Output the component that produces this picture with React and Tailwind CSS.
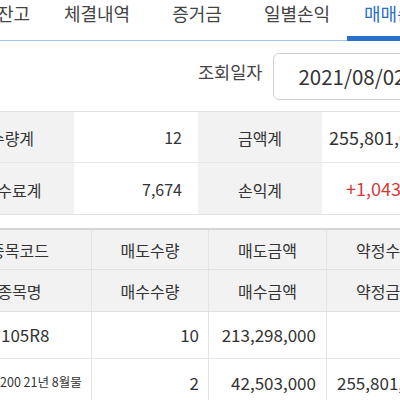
const tabs = ['계좌잔고', '체결내역', '증거금', '일별손익', '매매손익'];

const summary = [
  ['수량계', '12', '금액계', '255,801,000', false],
  ['수수료계', '7,674', '손익계', '+1,043,000', true],
];

function Cell({ children, className = '' }) {
  return <div className={`flex items-center border-r border-[#e4e4e4] ${className}`}>{children}</div>;
}

export default function App() {
  return (
    <div
      className="w-[400px] h-[400px] overflow-hidden bg-white text-[#333]"
      style={{ fontFamily: '"Noto Sans CJK KR", "Noto Sans", sans-serif' }}
    >
      {/* tabs */}
      <div className="flex ml-[-53px] h-[41px]">
        {tabs.map((t, i) => {
          const active = i === tabs.length - 1;
          return (
            <div
              key={t}
              className={`w-[100px] shrink-0 h-[41px] flex justify-center text-[18px] leading-[26px] ${
                active ? 'border-b-[5px] border-[#2c6fc8] text-[#2c6fc8]' : 'border-b border-[#9fc2ec] text-[#444]'
              }`}
            >
              {t}
            </div>
          );
        })}
      </div>

      {/* date */}
      <div className="flex items-center h-[70px] pl-[198px]">
        <span className="text-[17.5px] text-[#444] mb-[8px] shrink-0">조회일자</span>
        <div className="ml-[11px] shrink-0 w-[200px] h-[47px] border border-[#cfcfcf] rounded-[6px] flex items-center pl-[24px] text-[20.5px] text-[#333]">
          2021/08/02
        </div>
      </div>

      {/* summary */}
      <div className="ml-[-50px] border-t border-b border-[#e2e2e2]">
        {summary.map(([l1, v1, l2, v2, red], i) => (
          <div key={l1} className={`grid grid-cols-[124px_124px_124px_124px] h-[51px] ${i === 0 ? 'border-b border-[#e6e6e6]' : ''}`}>
            <div className="bg-[#f2f2f2] flex items-center justify-center text-[16px] pt-[2px]">{l1}</div>
            <div className="flex items-center justify-end pr-[16px] text-[16px]">{v1}</div>
            <div className="bg-[#f2f2f2] flex items-center justify-center text-[16px] pt-[2px]">{l2}</div>
            <div className={`flex items-center text-[18px] ${red ? 'pl-[24px] text-[#d23a3a]' : 'pl-[7px]'}`}>{v2}</div>
          </div>
        ))}
      </div>

      {/* detail table */}
      <div className="mt-[13px] ml-[-52px] border-t-2 border-[#d4d4d4]">
        <div className="grid grid-cols-[144px_117px_118px_118px] h-[40px] bg-[#f2f2f2] border-b border-[#e2e2e2] text-[16px]">
          <Cell className="justify-center">종목코드</Cell>
          <Cell className="justify-center">매도수량</Cell>
          <Cell className="justify-center">매도금액</Cell>
          <Cell className="justify-center">약정수량</Cell>
        </div>
        <div className="grid grid-cols-[144px_117px_118px_118px] h-[42px] bg-[#f2f2f2] border-b border-[#e2e2e2] text-[16px]">
          <Cell className="justify-center">종목명</Cell>
          <Cell className="justify-center">매수수량</Cell>
          <Cell className="justify-center">매수금액</Cell>
          <Cell className="justify-center">약정금액</Cell>
        </div>
        <div className="grid grid-cols-[144px_117px_118px_118px] h-[47px] border-b border-[#e6e6e6] text-[17px]">
          <Cell className="pl-[53px]">105R8</Cell>
          <Cell className="justify-end pr-[9px]">10</Cell>
          <Cell className="justify-end pr-[10px]">213,298,000</Cell>
          <Cell className="justify-end pr-[10px]"></Cell>
        </div>
        <div className="grid grid-cols-[144px_117px_118px_118px] h-[47px] text-[17px]">
          <Cell className="pl-[52px] text-[12.5px]">200 21년 8월물</Cell>
          <Cell className="justify-end pr-[9px]">2</Cell>
          <Cell className="justify-end pr-[10px]">42,503,000</Cell>
          <Cell className="pl-[10px]">255,801,000</Cell>
        </div>
      </div>
    </div>
  );
}
